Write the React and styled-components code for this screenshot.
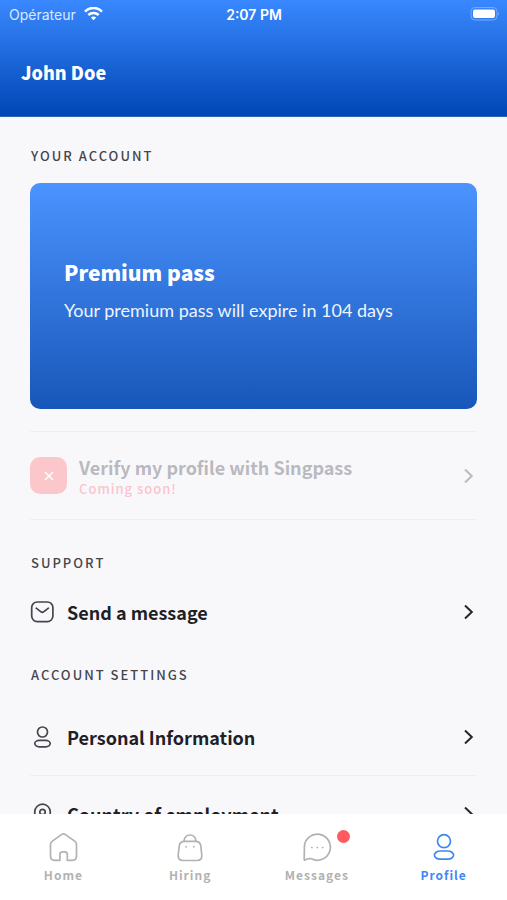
import React from 'react';
import styled, { createGlobalStyle } from 'styled-components';

const GlobalStyle = createGlobalStyle`
  * {
    box-sizing: border-box;
  }

  body {
    margin: 0;
    background: #f8f8fb;
    font-family: "Noto Sans CJK SC", "Noto Sans", sans-serif;
    color: #1f1f27;
  }
`;

const Screen = styled.div`
  display: flex;
  flex-direction: column;
  height: 100vh;
`;

const Header = styled.header`
  color: #fff;
  background: linear-gradient(#3a88ff, #0046b5);
  border-bottom: 1px solid #2a62b4;
`;

const StatusBar = styled.div`
  display: grid;
  grid-template-columns: 1fr auto 1fr;
  align-items: center;
  height: 28px;
  padding: 0 8px 0 9px;
  font-family: Inter, sans-serif;
  font-size: 14px;
`;

const Carrier = styled.div`
  display: flex;
  align-items: center;
  gap: 8px;
  color: #dce9ff;
`;

const Clock = styled.time`
  font-weight: 600;
`;

const BatteryIcon = styled.svg`
  justify-self: end;
`;

const UserName = styled.h1`
  margin: 0;
  padding: 30px 21px;
  font-size: 18px;
  line-height: 28px;
  font-weight: 900;
`;

const Content = styled.main`
  flex: 1;
  min-height: 0;
  overflow-y: auto;
  scrollbar-width: none;
  padding: 28px 30px 0;
`;

const SectionTitle = styled.h2`
  margin: 0;
  padding-left: 1px;
  font-size: 13px;
  line-height: 22px;
  font-weight: 500;
  letter-spacing: 2px;
  text-transform: uppercase;
  color: #45454b;
`;

const Card = styled.section`
  display: flex;
  flex-direction: column;
  justify-content: center;
  gap: 8px;
  height: 226px;
  margin: 16px 0 22px;
  padding: 0 34px 16px;
  border-radius: 10px;
  color: #fff;
  background: linear-gradient(#4b93ff, #1857b9);
`;

const CardTitle = styled.h3`
  margin: 0;
  font-size: 21px;
  line-height: 36px;
  font-weight: 900;
`;

const CardText = styled.p`
  margin: 0;
  font-family: Lato, sans-serif;
  font-size: 18px;
  line-height: 24px;
  color: #eef4ff;
`;

const Row = styled.button`
  display: flex;
  align-items: center;
  width: 100%;
  height: ${p => p.$height || 76}px;
  padding: 0 2px 0 0;
  border: 0;
  background: none;
  font: inherit;
  color: inherit;
  text-align: left;
`;

const Divider = styled.hr`
  height: 1px;
  margin: 0;
  border: 0;
  background: #efeff2;
`;

const RowIcon = styled.svg`
  flex: none;
  width: 24px;
  height: 24px;
  margin-right: 13px;
  fill: none;
  stroke: #45454b;
  stroke-width: 1.7;
  stroke-linecap: round;
  stroke-linejoin: round;
`;

const RowLabel = styled.span`
  flex: 1;
  font-size: 18px;
  line-height: 26px;
  font-weight: 700;
`;

const Muted = styled.span`
  display: block;
  color: #b9b9bf;
`;

const Note = styled.span`
  display: block;
  font-size: 13px;
  line-height: 18px;
  font-weight: 500;
  letter-spacing: 1px;
  color: #fcc3cd;
`;

const StatusTile = styled.span`
  display: flex;
  align-items: center;
  justify-content: center;
  width: 37px;
  height: 37px;
  margin-right: 12px;
  border-radius: 10px;
  background: #fcc7cb;
`;

const Chevron = styled.svg`
  flex: none;
  fill: none;
  stroke: ${p => (p.$muted ? '#b9b9bf' : '#25252c')};
  stroke-width: 2;
`;

const Gap = styled.div`
  height: ${p => p.$size}px;
`;

const TabBar = styled.nav`
  display: grid;
  grid-template-columns: repeat(4, 1fr);
  height: 86px;
  background: #fff;
`;

const Tab = styled.a`
  display: flex;
  flex-direction: column;
  align-items: center;
  padding-top: 18px;
  font-size: 12px;
  line-height: 26px;
  font-weight: 700;
  letter-spacing: 1px;
  text-decoration: none;
  color: ${p => (p.$active ? '#3f87f5' : '#b2b2b2')};
`;

const TabIcon = styled.span`
  position: relative;
  height: 30px;

  svg {
    display: block;
    fill: none;
    stroke: currentColor;
    stroke-width: 1.7;
    stroke-linecap: round;
    stroke-linejoin: round;
  }
`;

const Badge = styled.i`
  position: absolute;
  top: -2px;
  right: -18px;
  width: 13px;
  height: 13px;
  border-radius: 50%;
  background: #ff5a5f;
`;

const Arrow = ({ muted }) => (
  <Chevron $muted={muted} width="12" height="16" viewBox="0 0 12 16">
    <path d="M2 1.5 L8.8 8 L2 14.5" />
  </Chevron>
);

const tabs = [
  {
    name: 'Home',
    icon: (
      <path d="M11.9 28.3 H6.5 Q2.5 28.3 2.5 24.3 V12.5 Q2.5 10.4 4.3 9.1 L13.5 2.6 Q15.5 1.2 17.5 2.6 L26.7 9.1 Q28.5 10.4 28.5 12.5 V24.3 Q28.5 28.3 24.5 28.3 H19.3 V22.6 Q19.3 19.8 16.8 19.8 H14.5 Q11.9 19.8 11.9 22.6 Z" />
    ),
  },
  {
    name: 'Hiring',
    icon: (
      <>
        <path d="M9.5 9.3 H20.5 Q25.2 9.3 25.8 14 L26.8 23 Q27.2 28.5 22 28.5 H8 Q2.8 28.5 3.2 23 L4.2 14 Q4.8 9.3 9.5 9.3 Z" />
        <path d="M9 9 C10 1 20 1 21 9" />
        <path d="M11.2 14.5 V14.8 M18.8 14.5 V14.8" />
      </>
    ),
  },
  {
    name: 'Messages',
    badge: true,
    icon: (
      <>
        <path d="M3 28 Q2.2 28.4 2.2 27.3 L2.4 15 A13 13 0 1 1 9.5 26.8 Q6 25.9 3 28 Z" />
        <path d="M9.7 15.5 H10 M15.1 15.5 H15.4 M20.5 15.5 H20.8" />
      </>
    ),
  },
  {
    name: 'Profile',
    active: true,
    icon: (
      <>
        <circle cx="15" cy="9.2" r="6.5" />
        <rect x="5.4" y="19" width="19.2" height="8.2" rx="6" ry="4.1" />
      </>
    ),
  },
];

const App = () => (
  <Screen>
    <GlobalStyle />
    <Header>
      <StatusBar>
        <Carrier>
          Opérateur
          <svg width="19" height="15" viewBox="0 0 19 15" fill="none" stroke="#fff" strokeWidth="2.5">
            <path d="M1 4.6 C6 -0.3 13 -0.3 18 4.6" />
            <path d="M4.3 8 C7.3 5.2 11.7 5.2 14.7 8" />
            <path d="M9.5 13.3 L6.8 10.6 Q9.5 8.3 12.2 10.6 Z" fill="#fff" stroke="none" />
          </svg>
        </Carrier>
        <Clock>2:07 PM</Clock>
        <BatteryIcon width="29" height="15" viewBox="0 0 29 15">
          <rect x="1" y="0.5" width="26" height="12.5" rx="4" fill="none" stroke="#78abfc" />
          <rect x="3" y="2.5" width="22" height="8.5" rx="2" fill="#fff" />
          <path d="M28 4.8 Q30 6.8 28 8.8 Z" fill="#78abfc" />
        </BatteryIcon>
      </StatusBar>
      <UserName>John Doe</UserName>
    </Header>

    <Content>
      <SectionTitle>Your account</SectionTitle>
      <Card>
        <CardTitle>Premium pass</CardTitle>
        <CardText>Your premium pass will expire in 104 days</CardText>
      </Card>

      <Divider />
      <Row $height={87} disabled>
        <StatusTile>
          <svg width="10" height="10" viewBox="0 0 10 10" stroke="#fff" strokeWidth="1.5">
            <path d="M1 1 L9 9 M9 1 L1 9" />
          </svg>
        </StatusTile>
        <RowLabel>
          <Muted>Verify my profile with Singpass</Muted>
          <Note>Coming soon!</Note>
        </RowLabel>
        <Arrow muted />
      </Row>
      <Divider />

      <Gap $size={32} />
      <SectionTitle>Support</SectionTitle>
      <Row>
        <RowIcon viewBox="0 0 24 24">
          <rect x="1.7" y="2" width="21.2" height="19.6" rx="5.5" />
          <path d="M6.2 8.2 L10.7 11.7 Q12.3 13 13.9 11.7 L18.4 8.2" />
        </RowIcon>
        <RowLabel>Send a message</RowLabel>
        <Arrow />
      </Row>

      <Gap $size={14} />
      <SectionTitle>Account settings</SectionTitle>
      <Gap $size={13} />
      <Row>
        <RowIcon viewBox="0 0 24 24">
          <circle cx="12.5" cy="7" r="5" />
          <rect x="4.8" y="15.4" width="15.4" height="6.4" rx="4.5" ry="3.2" />
        </RowIcon>
        <RowLabel>Personal Information</RowLabel>
        <Arrow />
      </Row>
      <Divider />
      <Row>
        <RowIcon viewBox="0 0 24 24">
          <path d="M12.5 22.4 C8 18.6 4.7 15 4.7 10 A7.8 7.8 0 0 1 20.3 10 C20.3 15 17 18.6 12.5 22.4 Z" />
          <circle cx="12.5" cy="10" r="2.7" />
        </RowIcon>
        <RowLabel>Country of employment</RowLabel>
        <Arrow />
      </Row>
    </Content>

    <TabBar>
      {tabs.map(tab => (
        <Tab key={tab.name} href={`#${tab.name.toLowerCase()}`} $active={tab.active}>
          <TabIcon>
            <svg width="30" height="30" viewBox="0 0 30 30">{tab.icon}</svg>
            {tab.badge && <Badge />}
          </TabIcon>
          {tab.name}
        </Tab>
      ))}
    </TabBar>
  </Screen>
);

export default App;
